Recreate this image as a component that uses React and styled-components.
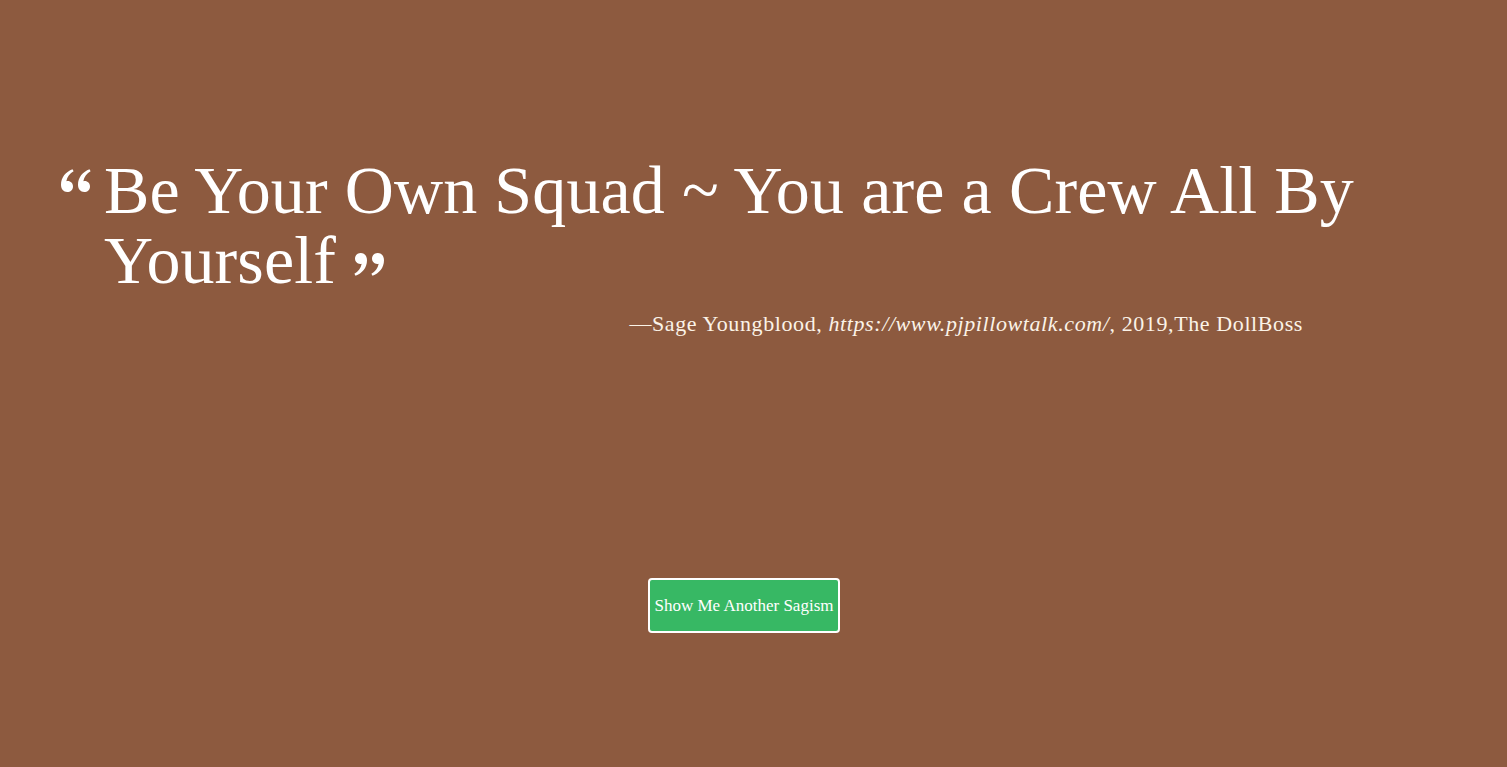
import React, { useState } from "react";
import styled, { createGlobalStyle } from "styled-components";

const sagisms = [
  {
    text: "Be Your Own Squad ~ You are a Crew All By Yourself",
    author: "Sage Youngblood",
    source: "https://www.pjpillowtalk.com/",
    year: "2019",
    book: "The DollBoss",
  },
];

const GlobalStyle = createGlobalStyle`
  html, body {
    margin: 0;
    padding: 0;
    background: #8d5a3f;
  }
`;

const QuoteMark = ({ flip, className }) => (
  <svg
    className={className}
    width="32"
    height="25"
    viewBox="0 0 32 25"
    style={flip ? { transform: "rotate(180deg)" } : undefined}
  >
    <g fill="#fff">
      <path d="M12.5 1.2 C6 3.6 1 9.2 1 16.8 C1 21 3.6 24 7.2 24 C10.6 24 13 21.6 13 18.4 C13 15.3 10.7 13 7.8 13 C7.2 13 6.7 13.1 6.3 13.2 C7.2 8.6 10 5.4 13.6 3.2 Z" />
      <path d="M29.5 1.2 C23 3.6 18 9.2 18 16.8 C18 21 20.6 24 24.2 24 C27.6 24 30 21.6 30 18.4 C30 15.3 27.7 13 24.8 13 C24.2 13 23.7 13.1 23.3 13.2 C24.2 8.6 27 5.4 30.6 3.2 Z" />
    </g>
  </svg>
);

const App = () => {
  const [index, setIndex] = useState(0);
  const q = sagisms[index];

  return (
    <Page>
      <GlobalStyle />
      <Container>
        <QuoteBlock>
          <LeftMark />
          <QuoteText>
            {q.text}
            <RightMark flip />
          </QuoteText>
        </QuoteBlock>
        <Author>
          —{q.author}, <cite>{q.source}</cite>, {q.year},{q.book}
        </Author>
        <ButtonRow>
          <NextButton onClick={() => setIndex((index + 1) % sagisms.length)}>
            Show Me Another Sagism
          </NextButton>
        </ButtonRow>
      </Container>
    </Page>
  );
};

export default App;

const Page = styled.div`
  min-height: 100vh;
  box-sizing: border-box;
  background: #8d5a3f;
  padding: 155px 0 0 60px;
  font-family: "Liberation Serif", "DejaVu Serif", serif;
  color: #fff;
`;

const Container = styled.div`
  width: 1368px;
  display: flex;
  flex-direction: column;
`;

const QuoteBlock = styled.div`
  display: flex;
  align-items: flex-start;
  gap: 12px;
`;

const LeftMark = styled(QuoteMark)`
  flex: none;
  margin-top: 13px;
`;

const RightMark = styled(QuoteMark)`
  margin-left: 17px;
  vertical-align: 6px;
`;

const QuoteText = styled.div`
  width: 1290px;
  font-size: 68px;
  line-height: 70px;
  letter-spacing: 0.1px;
  font-weight: 400;
`;

const Author = styled.div`
  margin-top: 15px;
  margin-right: 125px;
  text-align: right;
  font-size: 22px;
  line-height: 28px;
  letter-spacing: 0.6px;
  color: #fbf3e8;

  cite {
    font-style: italic;
  }
`;

const ButtonRow = styled.div`
  margin-top: 240px;
  display: flex;
  justify-content: center;
`;

const NextButton = styled.button`
  height: 55px;
  padding: 0 5px;
  background: #37b864;
  border: 2px solid #fff;
  border-radius: 4px;
  color: #fff;
  font-family: "Liberation Serif", "DejaVu Serif", serif;
  font-size: 17px;
  cursor: pointer;
`;
